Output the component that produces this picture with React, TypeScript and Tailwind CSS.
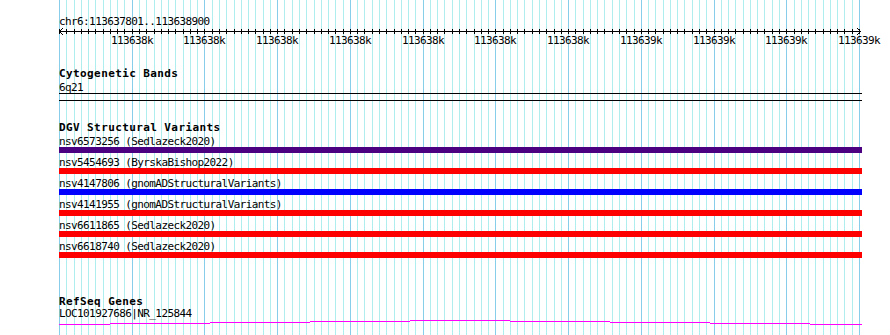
const MINOR_COUNT = 110;
const SPAN = 800;
const LEFT = 59;

const lineX = (i: number) => Math.round(LEFT + (i * SPAN) / MINOR_COUNT);

const variants = [
  { name: "nsv6573256 (Sedlazeck2020)", color: "bg-[#4b0082]" },
  { name: "nsv5454693 (ByrskaBishop2022)", color: "bg-[#ff0000]" },
  { name: "nsv4147806 (gnomADStructuralVariants)", color: "bg-[#0000ff]" },
  { name: "nsv4141955 (gnomADStructuralVariants)", color: "bg-[#ff0000]" },
  { name: "nsv6611865 (Sedlazeck2020)", color: "bg-[#ff0000]" },
  { name: "nsv6618740 (Sedlazeck2020)", color: "bg-[#ff0000]" },
];

// gene model drawn as little stepped segments
const geneSteps: [number, number, number][] = [
  [59, 110, 324],
  [110, 210, 323],
  [210, 310, 322],
  [310, 410, 321],
  [410, 510, 320],
  [510, 610, 321],
  [610, 710, 322],
  [710, 810, 323],
  [810, 862, 324],
];

const GridLines = () => (
  <svg className="absolute left-0 top-0" width={890} height={335}>
    {Array.from({ length: MINOR_COUNT + 1 }, (_, i) => (
      <rect
        key={i}
        x={lineX(i)}
        y={0}
        width={1}
        height={335}
        fill={i % 10 === 0 ? "#87ceeb" : "#afeeee"}
      />
    ))}
  </svg>
);

const Ruler = () => (
  <svg width={890} height={20} className="block overflow-visible">
    <rect x={LEFT} y={4} width={802} height={1} fill="#000" />
    {Array.from({ length: MINOR_COUNT + 1 }, (_, i) => (
      <rect key={i} x={lineX(i)} y={2} width={1} height={5} fill="#000" />
    ))}
    <polyline points="63,1 59.5,4.5 63,8" fill="none" stroke="#000" strokeWidth={1} />
    <polyline points="857,1 860.5,4.5 857,8" fill="none" stroke="#000" strokeWidth={1} />
    {Array.from({ length: 11 }, (_, k) => (
      <text
        key={k}
        x={lineX((k + 1) * 10)}
        y={17}
        textAnchor="middle"
        fontSize={11}
        letterSpacing={-0.6}
        fontFamily="'DejaVu Sans Mono', monospace"
        fill="#000"
      >
        {k < 7 ? "113638k" : "113639k"}
      </text>
    ))}
  </svg>
);

const label = "pl-[59px] h-[12px] text-[11px] leading-[14px] tracking-[-0.6px] whitespace-nowrap";

const TrackTitle = ({ title, className }: { title: string; className: string }) => (
  <div className={`pl-[59px] h-[12px] text-[11px] leading-[14px] font-bold tracking-[0.4px] ${className}`}>
    {title}
  </div>
);

export default function App() {
  return (
    <div className="relative w-[890px] h-[335px] overflow-hidden bg-white text-black font-['DejaVu_Sans_Mono',monospace]">
      <GridLines />
      <div className="relative flex flex-col">
        <div className={`mt-[15px] ${label}`}>chr6:113637801..113638900</div>
        <Ruler />

        <TrackTitle title="Cytogenetic Bands" className="mt-[20px]" />
        <div className={`mt-[2px] ${label}`}>6q21</div>
        <div className="ml-[59px] w-[803px] h-px bg-black" />
        <div className="mt-[6px] ml-[59px] w-[803px] h-px bg-black" />

        <TrackTitle title="DGV Structural Variants" className="mt-[20px]" />
        <div className="mt-[2px] flex flex-col gap-[3px]">
          {variants.map((v) => (
            <div key={v.name} className="flex flex-col">
              <div className={label}>{v.name}</div>
              <div className={`ml-[59px] w-[803px] h-[6px] ${v.color}`} />
            </div>
          ))}
        </div>

        <TrackTitle title="RefSeq Genes" className="mt-[37px]" />
        <div className={label}>LOC101927686|NR_125844</div>
        <svg width={890} height={8} className="block">
          {geneSteps.map(([x1, x2, y]) => (
            <rect key={x1} x={x1} y={y - 319} width={x2 - x1} height={1} fill="#ff00ff" />
          ))}
        </svg>
      </div>
    </div>
  );
}
